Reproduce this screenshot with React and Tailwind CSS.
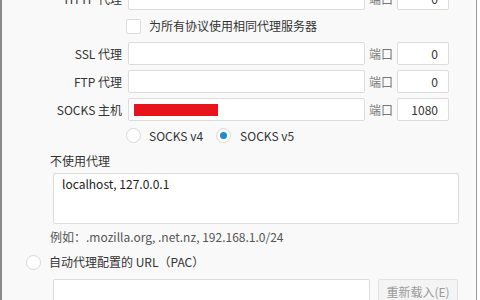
import React from 'react';

const font = { fontFamily: '"Noto Sans CJK SC", "Noto Sans", sans-serif' };

const ProxyRow = ({ label, host, port, className = '' }) => (
  <div className={`flex items-center h-[23px] shrink-0 ${className}`}>
    <div className="w-[120px] text-right text-[12px] text-[#333]">{label}</div>
    <div className="ml-[6px] w-[237px] h-[23px] bg-white border border-[#dcdcdc] rounded-[2px] flex items-center px-[4px]">
      {host}
    </div>
    <div className="ml-[4px] w-[24px] text-[12px] text-[#777]">端口</div>
    <div className="ml-[4px] w-[52px] h-[23px] bg-white border border-[#dcdcdc] rounded-[2px] flex items-center justify-end pr-[10px] text-[12px] text-[#333]">
      {port}
    </div>
  </div>
);

const Radio = ({ checked }) => (
  <div className="w-[15px] h-[15px] rounded-full bg-white border border-[#d8d8d8] flex items-center justify-center shrink-0">
    {checked && <div className="w-[7px] h-[7px] rounded-full bg-[#1f8ad2]" />}
  </div>
);

const App = () => {
  return (
    <div className="w-[480px] h-[300px] overflow-hidden bg-white" style={font}>
      <div className="w-[477px] h-[300px] bg-[#f9f9f9] border-l-2 border-r border-l-[#8a8a8a] border-r-[#9a9a9a] flex flex-col leading-[16px]">
        <ProxyRow label="HTTP 代理" port="0" className="-mt-[13px]" />

        <div className="flex items-center h-[32px] shrink-0">
          <div className="ml-[124px] w-[15px] h-[15px] bg-white border border-[#dcdcdc] rounded-[2px]" />
          <span className="ml-[8px] text-[12px] text-[#333]">为所有协议使用相同代理服务器</span>
        </div>

        <ProxyRow label="SSL 代理" port="0" />
        <ProxyRow label="FTP 代理" port="0" className="mt-[5px]" />
        <ProxyRow
          label="SOCKS 主机"
          port="1080"
          className="mt-[5px]"
          host={<div className="ml-[1px] w-[84px] h-[12px] bg-[#e8141c]" />}
        />

        <div className="flex items-center h-[29px] shrink-0">
          <div className="ml-[124px]"><Radio /></div>
          <span className="ml-[8px] text-[12px] text-[#333]">SOCKS v4</span>
          <div className="ml-[13px]"><Radio checked /></div>
          <span className="ml-[9px] text-[12px] text-[#333]">SOCKS v5</span>
        </div>

        <div className="flex items-center h-[22px] shrink-0 pl-[48px] text-[12px] text-[#333]">不使用代理</div>

        <div className="ml-[51px] mt-[1px] w-[406px] h-[51px] shrink-0 bg-white border border-[#dcdcdc] rounded-[2px] pl-[8px] pt-[2px] text-[12px] text-[#222]">
          localhost, 127.0.0.1
        </div>

        <div className="flex items-center h-[26px] shrink-0 pl-[48px] text-[12px] text-[#555]">
          例如：.mozilla.org, .net.nz, 192.168.1.0/24
        </div>

        <div className="flex items-center h-[24px] shrink-0">
          <div className="ml-[24px]"><Radio /></div>
          <span className="ml-[8px] text-[12px] text-[#333]">自动代理配置的 URL（PAC）</span>
        </div>

        <div className="flex mt-[5px] shrink-0">
          <div className="ml-[51px] w-[317px] h-[26px] bg-white border border-[#dcdcdc] rounded-[2px]" />
          <div className="ml-[8px] w-[80px] h-[26px] bg-[#f4f4f4] border border-[#e2e2e2] rounded-[2px] flex items-center justify-center text-[12px] text-[#9a9a9a]">
            重新载入(E)
          </div>
        </div>
      </div>
    </div>
  );
};

export default App;
